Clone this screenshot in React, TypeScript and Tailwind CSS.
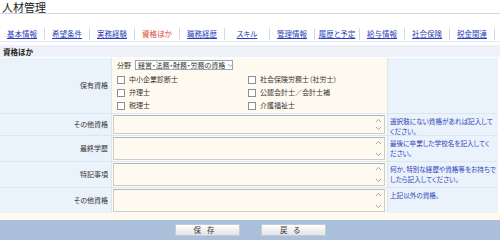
import React from "react"

const font = { fontFamily: '"Noto Sans CJK JP", "Noto Sans", sans-serif' }

const tabs = ["基本情報", "希望条件", "実務経験", "資格ほか", "職務経歴", "スキル", "管理情報", "履歴と予定", "給与情報", "社会保険", "税金関連"]

const Chevron = ({ up }: { up?: boolean }) => (
    <svg width="7" height="5" viewBox="0 0 7 5" className="shrink-0">
        <path d={up ? "M1 4 L3.5 1.5 L6 4" : "M1 1 L3.5 3.5 L6 1"} fill="none" stroke="#a0a8b4" strokeWidth="1" />
    </svg>
)

const TextBox = () => (
    <div className="flex h-full w-full border border-[#c8ccd4] border-t-[#a9b7cc] bg-[#fffaf0]">
        <div className="flex-1" />
        <div className="flex w-[11px] flex-col items-center justify-between py-[2px]">
            <Chevron up />
            <Chevron />
        </div>
    </div>
)

const Check = ({ label }: { label: string }) => (
    <div className="flex h-[13px] items-center gap-[4px]">
        <span className="h-[8px] w-[8px] border border-[#8a8f98] bg-white" />
        <span>{label}</span>
    </div>
)

const rows = [
    { label: "その他資格", help: "選択肢にない資格があれば記入してください。", h: "h-[21px]" },
    { label: "最終学歴", help: "最後に卒業した学校名を記入してください。", h: "h-[25px]" },
    { label: "特記事項", help: "何か、特別な経歴や資格等をお持ちでしたら記入してください。", h: "h-[25px]" },
    { label: "その他資格", help: "上記以外の資格。", h: "h-[25px]" },
]

export default function App() {
    return (
        <div style={font} className="flex h-[240px] w-[500px] flex-col overflow-hidden bg-white text-[7px] leading-[9px] text-[#333] [font-feature-settings:'palt']">
            <div className="h-[14px] border-b border-[#c9d7ea] px-[2px] pt-[1px] text-[11px] leading-[12px] text-[#222]">人材管理</div>

            <div className="mt-[12px] flex h-[16px] items-center border-b border-[#e4e8ee]">
                {tabs.map((t) => (
                    <div key={t} className="flex h-[12px] w-[45px] items-center justify-center border-r border-[#d6dbe3] text-[7.5px]">
                        <span className={t === "資格ほか" ? "text-[#e0443a]" : "text-[#2d3fb8] underline"}>{t}</span>
                    </div>
                ))}
            </div>

            <div className="mt-[3px] flex h-[12px] items-center bg-[#eef2f8] px-[3px] text-[7.5px] font-bold text-[#222]">資格ほか</div>

            <div className="mt-[1px] grid w-[498px] grid-cols-[111px_275px_1fr] gap-x-[1px] gap-y-[1px] bg-[#dfe5ec]">
                <div className="flex h-[55px] items-center justify-end bg-[#eaf2fb] pr-[3px]">保有資格</div>
                <div className="flex h-[55px] flex-col bg-[#fffaf0] pl-[5px] pt-[2px]">
                    <div className="flex items-center gap-[4px]">
                        <span>分野</span>
                        <div className="flex h-[10px] w-[98px] items-center justify-between gap-[2px] overflow-hidden whitespace-nowrap border border-[#9aa4b2] bg-white pl-[2px] pr-[1px]">
                            <span>経営・法務・財務・労務の資格</span>
                            <Chevron />
                        </div>
                    </div>
                    <div className="mt-[3px] grid grid-cols-[131px_1fr]">
                        <Check label="中小企業診断士" />
                        <Check label="社会保険労務士（社労士）" />
                        <Check label="弁理士" />
                        <Check label="公認会計士／会計士補" />
                        <Check label="税理士" />
                        <Check label="介護福祉士" />
                    </div>
                </div>
                <div className="h-[55px] bg-[#eaf2fb]" />

                {rows.map((r, i) => (
                    <React.Fragment key={i}>
                        <div className={`flex ${r.h} items-center justify-end bg-[#eaf2fb] pr-[3px]`}>{r.label}</div>
                        <div className={`${r.h} bg-[#fffaf0] py-[1px] pl-[1px] pr-[2px]`}>
                            <TextBox />
                        </div>
                        <div className={`${r.h} bg-[#eaf2fb] px-[2px] pt-[2px] text-[6.6px] leading-[10px] text-[#2d3fb8]`}>{r.help}</div>
                    </React.Fragment>
                ))}
            </div>

            <div className="h-[7px] bg-[#fffaf0]" />

            <div className="flex flex-1 items-start justify-center gap-[21px] bg-[#a9bfda] pt-[4px]">
                <button className="h-[12px] w-[65px] border border-[#c8ccd2] bg-gradient-to-b from-white to-[#e2e4e8] text-[7.5px] leading-[10px] tracking-[6px] text-[#333]">保存</button>
                <button className="h-[12px] w-[65px] border border-[#c8ccd2] bg-gradient-to-b from-white to-[#e2e4e8] text-[7.5px] leading-[10px] tracking-[6px] text-[#333]">戻る</button>
            </div>
        </div>
    )
}
